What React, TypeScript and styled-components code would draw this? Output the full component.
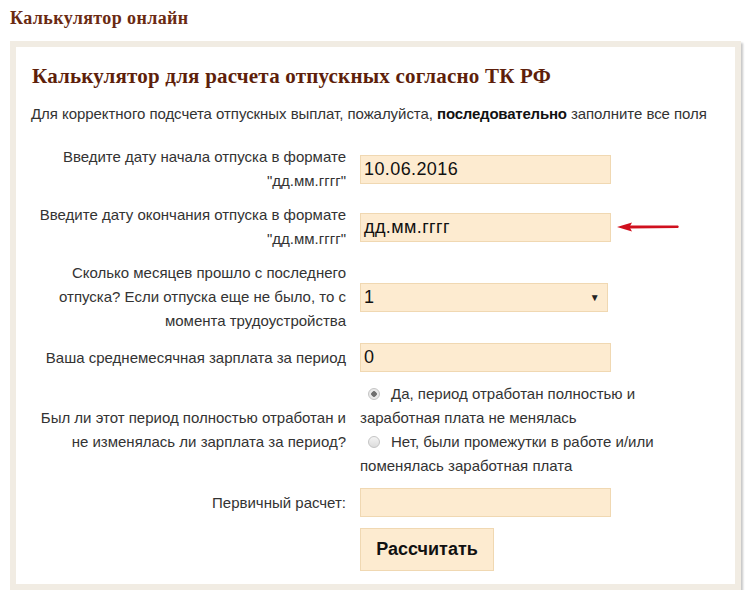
import React from 'react';
import styled, { createGlobalStyle } from 'styled-components';

const GlobalStyle = createGlobalStyle`
  body {
    margin: 0;
    background: #fff;
    font-family: 'Liberation Sans', Arial, sans-serif;
  }
`;

const Page = styled.div`
  width: 748px;
  padding: 0 10px;
  box-sizing: border-box;
`;

const SiteTitle = styled.div`
  font-family: 'Liberation Serif', Georgia, serif;
  font-weight: 700;
  font-size: 18px;
  letter-spacing: 0.4px;
  color: #6a2a12;
  height: 41px;
  padding-top: 8px;
  box-sizing: border-box;
`;

const Card = styled.div`
  width: 731px;
  box-sizing: border-box;
  border: 6px solid #f1ece3;
  box-shadow: 2px 2px 2px rgba(0, 0, 0, 0.22);
  background: #fff;
  padding: 17px 10px 13px 10px;
`;

const Heading = styled.h2`
  margin: 0 0 0 6px;
  font-family: 'Liberation Serif', Georgia, serif;
  font-weight: 700;
  font-size: 21px;
  letter-spacing: 0.2px;
  line-height: 24px;
  color: #5e1f0b;
`;

const Lead = styled.p`
  margin: 16px 0 0 5px;
  font-size: 15px;
  letter-spacing: -0.05px;
  line-height: 20px;
  color: #333;

  b {
    color: #111;
    letter-spacing: -0.2px;
  }
`;

const Form = styled.div`
  display: grid;
  grid-template-columns: 316px 1fr;
  column-gap: 14px;
  row-gap: 10px;
  align-items: center;
  margin-top: 21px;
  margin-left: 4px;
`;

const Label = styled.div`
  text-align: right;
  font-size: 15px;
  line-height: 24px;
  color: #333;
`;

const Field = styled.div`
  display: flex;
  align-items: center;
`;

const Box = styled.div<{ $w?: number }>`
  width: ${(p) => p.$w ?? 251}px;
  height: 29px;
  box-sizing: border-box;
  background: #fdebd0;
  border: 1px solid #f0d8b2;
  padding: 0 3px;
  display: flex;
  align-items: center;
  justify-content: space-between;
  font-size: 18px;
  letter-spacing: 0.4px;
  color: #111;
`;

const Caret = styled.span`
  font-size: 10px;
  color: #222;
  margin-right: 4px;
`;

const Arrow = styled.svg`
  margin-left: 6px;
`;

const Radios = styled.div`
  width: 296px;
  font-size: 15px;
  line-height: 24px;
  color: #333;
`;

const RadioLine = styled.div``;

const NoBreak = styled.span`
  white-space: nowrap;
`;

const Dot = styled.span<{ $on?: boolean }>`
  display: inline-block;
  width: 12px;
  height: 12px;
  box-sizing: border-box;
  border-radius: 50%;
  border: 1px solid #c4c4c4;
  background: ${(p) =>
    p.$on
      ? 'radial-gradient(circle, #6f6f6f 0 2.5px, #e9e9e9 3px)'
      : 'linear-gradient(#f4f4f4, #dcdcdc)'};
  margin: 0 11px 0 8px;
  vertical-align: -1px;
`;

const Button = styled.button`
  width: 134px;
  height: 43px;
  background: #fdebd0;
  border: 1px solid #f0d8b2;
  font-family: 'Liberation Sans', Arial, sans-serif;
  font-weight: 700;
  font-size: 18px;
  color: #111;
  cursor: pointer;
  margin-top: 1px;
`;

const Spacer = styled.div``;

export default function App() {
  return (
    <>
      <GlobalStyle />
      <Page>
        <SiteTitle>Калькулятор онлайн</SiteTitle>
        <Card>
          <Heading>Калькулятор для расчета отпускных согласно ТК РФ</Heading>
          <Lead>
            Для корректного подсчета отпускных выплат, пожалуйста, <b>последовательно</b> заполните все поля
          </Lead>
          <Form>
            <Label>
              Введите дату начала отпуска в формате
              <br />
              "дд.мм.гггг"
            </Label>
            <Field>
              <Box>10.06.2016</Box>
            </Field>

            <Label>
              Введите дату окончания отпуска в формате
              <br />
              "дд.мм.гггг"
            </Label>
            <Field>
              <Box>дд.мм.гггг</Box>
              <Arrow width="62" height="10" viewBox="0 0 62 10">
                <path d="M12 3.5 L61 3.5 Q62.5 4.8 61 6 L12 6.5 Z" fill="#d0101e" />
                <path d="M0 5 L15 0.5 L12.5 5 L15 9.5 Z" fill="#d0101e" />
              </Arrow>
            </Field>

            <Label>
              Сколько месяцев прошло с последнего
              <br />
              отпуска? Если отпуска еще не было, то с
              <br />
              момента трудоустройства
            </Label>
            <Field>
              <Box $w={248}>
                1<Caret>▼</Caret>
              </Box>
            </Field>

            <Label>Ваша среднемесячная зарплата за период</Label>
            <Field>
              <Box>0</Box>
            </Field>

            <Label>
              Был ли этот период полностью отработан и
              <br />
              не изменялась ли зарплата за период?
            </Label>
            <Radios>
              <RadioLine>
                <Dot $on />
                Да, период отработан полностью и заработная плата не менялась
              </RadioLine>
              <RadioLine>
                <Dot />
                Нет, были промежутки в работе <NoBreak>и/или</NoBreak> поменялась заработная плата
              </RadioLine>
            </Radios>

            <Label>Первичный расчет:</Label>
            <Field>
              <Box />
            </Field>

            <Spacer />
            <Field>
              <Button>Рассчитать</Button>
            </Field>
          </Form>
        </Card>
      </Page>
    </>
  );
}
